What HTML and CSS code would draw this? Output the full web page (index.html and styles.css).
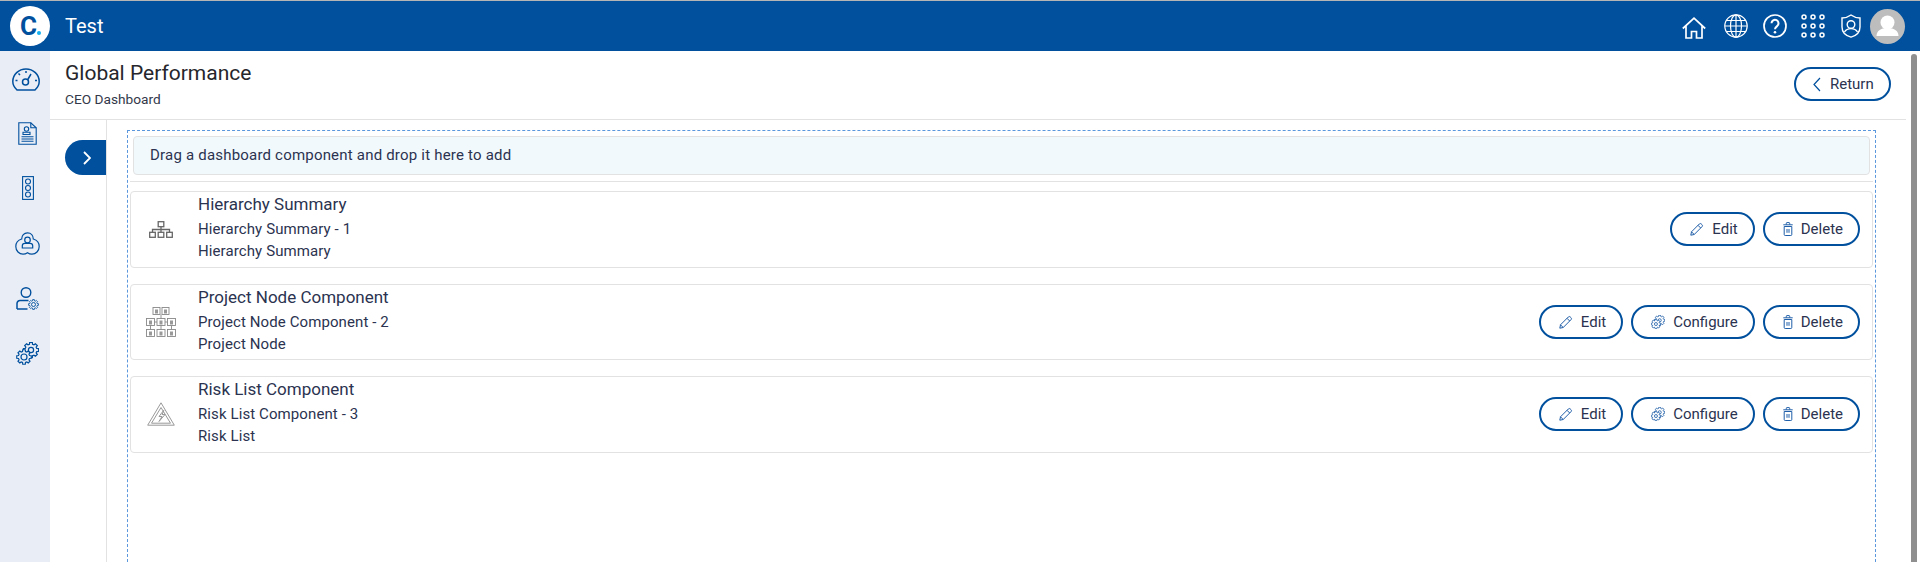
FILE: index.html
```html
<!DOCTYPE html>
<html lang="en">
<head>
<meta charset="utf-8">
<title>Global Performance</title>
<link rel="stylesheet" href="styles.css">
</head>
<body>
<svg class="defs" width="0" height="0" aria-hidden="true">
  <defs>
    <polygon id="gear-shape" points="5.99,-1.6 7.88,-1.39 7.88,1.39 5.99,1.6 5.37,3.1 6.55,4.59 4.59,6.55 3.1,5.37 1.6,5.99 1.39,7.88 -1.39,7.88 -1.6,5.99 -3.1,5.37 -4.59,6.55 -6.55,4.59 -5.37,3.1 -5.99,1.6 -7.88,1.39 -7.88,-1.39 -5.99,-1.6 -5.37,-3.1 -6.55,-4.59 -4.59,-6.55 -3.1,-5.37 -1.6,-5.99 -1.39,-7.88 1.39,-7.88 1.6,-5.99 3.1,-5.37 4.59,-6.55 6.55,-4.59 5.37,-3.1"/>
    <symbol id="i-pencil" viewBox="0 0 14 14"><path d="M.8 13.200l.7-3.400L9.300 2a1.400 1.400 0 0 1 2 0l.7.7a1.400 1.400 0 0 1 0 2L4.200 12.500z M1.500 9.800l2.700 2.700 M8 3.300l2.700 2.700" fill="none" stroke="currentColor" stroke-width="1"/></symbol>
    <symbol id="i-gear2" viewBox="0 0 15 15"><g stroke="currentColor" fill="#fff"><use href="#gear-shape" transform="translate(9.300 5.700) scale(.7)" stroke-width="1.300"/><circle cx="9.300" cy="5.700" r="1.700" stroke-width=".9"/><use href="#gear-shape" transform="translate(5.300 9.700) scale(.64)" stroke-width="1.400"/><circle cx="5.300" cy="9.700" r="1.600" stroke-width=".9"/></g></symbol>
    <symbol id="i-trash" viewBox="0 0 10 14"><path d="M.3 2.800h9.400 M3.300 2.600V1.300a.7.7 0 0 1 .7-.7h2a.7.7 0 0 1 .7.7v1.300 M1.200 4.500h7.600v8a1 1 0 0 1-1 1H2.200a1 1 0 0 1-1-1z M4 7v3.800 M6 7v3.800" fill="none" stroke="currentColor" stroke-width="1"/></symbol>
  </defs>
</svg>
<div class="app">
  <header class="topbar">
    <div class="logo"><span class="logo-c">C</span><span class="logo-dot"></span></div>
    <span class="app-name">Test</span>
    <div class="top-icons">
      <svg class="ti ti-home" viewBox="0 0 24 22"><path d="M.8 11.500L12 1.200 23.200 11.500M4 9v12H9.500V14.500H14.500V21H20V9" fill="none" stroke="#fff" stroke-width="1.700"/></svg>
      <svg class="ti ti-globe" viewBox="0 0 24 24"><g fill="none" stroke="#fff" stroke-width="1.200"><circle cx="12" cy="12" r="11.200"/><ellipse cx="12" cy="12" rx="5.500" ry="11.200"/><path d="M12 .8v22.400M.8 12h22.400M2.500 6.500h19M2.500 17.500h19"/></g></svg>
      <svg class="ti ti-help" viewBox="0 0 24 24"><circle cx="12" cy="12" r="11" fill="none" stroke="#fff" stroke-width="1.700"/><path d="M8.500 9.300a3.500 3.500 0 1 1 5.600 2.800c-1.300 1-2.100 1.600-2.100 3.200" fill="none" stroke="#fff" stroke-width="2"/><circle cx="12" cy="18.300" r="1.300" fill="#fff"/></svg>
      <svg class="ti ti-grid" viewBox="0 0 24 24"><g fill="none" stroke="#fff" stroke-width="1.500"><circle cx="3" cy="3" r="2"/><circle cx="12" cy="3" r="2"/><circle cx="21" cy="3" r="2"/><circle cx="3" cy="12" r="2"/><circle cx="12" cy="12" r="2"/><circle cx="21" cy="12" r="2"/><circle cx="3" cy="21" r="2"/><circle cx="12" cy="21" r="2"/><circle cx="21" cy="21" r="2"/></g></svg>
      <svg class="ti ti-shield" viewBox="0 0 20 24"><g fill="none" stroke="#fff" stroke-width="1.400"><path d="M10 1c2.400 1.800 5.300 2.800 9 3v9c0 5-3.800 8.700-9 10.200C4.800 21.700 1 18 1 13V4c3.700-.2 6.600-1.200 9-3z"/><circle cx="10" cy="10.500" r="3.800"/><path d="M3.500 18c1.400-2.400 3.500-3.400 6.500-3.400s5.100 1 6.500 3.400"/></g></svg>
      <div class="avatar"><svg viewBox="0 0 35 35"><circle cx="17.500" cy="13.500" r="7" fill="#fff"/><path d="M6.500 27c0-5 4-8 11-8s11 3 11 8z" fill="#fff"/></svg></div>
    </div>
  </header>
  <div class="body">
    <nav class="sidebar">
      <svg class="si si-gauge" viewBox="0 0 28 23"><g fill="none" stroke="#00509e" stroke-width="1.500"><path d="M5 22H23C25.700 19.500 27.200 16.500 27.200 13.500A13.200 12.500 0 0 0 .8 13.500C.8 16.500 2.300 19.500 5 22z"/><circle cx="13.500" cy="14" r="3"/><path d="M15.500 12L19 6M3.500 12.500h2M23 12.500h2M14 3v2M6.500 5.500l1.500 1.500"/></g></svg>
      <svg class="si si-doc" viewBox="0 0 19 23"><g fill="none" stroke="#00509e" stroke-width="1.100"><path d="M.8.800h12l5.400 5v16.400H.8z"/><path d="M12.800.8v5h5.400"/><circle cx="8.500" cy="7" r="2.200"/><path d="M5 12.500v-2.300h7v2.300zM3.500 14.800h12M3.500 17h12M3.500 19.300h12"/></g></svg>
      <svg class="si si-panel" viewBox="0 0 12 24"><g fill="none" stroke="#00509e" stroke-width="1.100"><rect x=".6" y=".6" width="10.800" height="22.800"/><circle cx="6" cy="5.500" r="2.500"/><circle cx="6" cy="12" r="2.500"/><circle cx="6" cy="18.500" r="2.500"/></g></svg>
      <svg class="si si-tri" viewBox="0 0 25 23"><g fill="none" stroke="#00509e" stroke-width="1.200"><path d="M12.500.8c3.500 0 5.800 2.700 5.800 6.200 3.500 1 5.900 3.600 5.900 7.500 0 4.300-3.400 7.700-7.200 7.700-1.800 0-3.200-.5-4.500-1.400-1.300.9-2.700 1.400-4.500 1.400C4.200 22.200.8 18.800.8 14.500.8 10.600 3.200 8 6.700 7 6.700 3.500 9 .8 12.500.8z"/><circle cx="12.500" cy="8" r="2.800"/><path d="M7.300 16v-2.300c0-1.500 1-2.400 2.500-2.400h5.400c1.500 0 2.500.9 2.500 2.400V16z"/></g></svg>
      <svg class="si si-user" viewBox="0 0 23 23"><g fill="none" stroke="#00509e" stroke-linejoin="round"><circle cx="10" cy="5.500" r="4.800" stroke-width="1.400"/><path d="M1 22V16.500a3 3 0 0 1 3-3h8.500M1 22h10.500" stroke-width="1.500"/></g><g stroke="#00509e" fill="#e9edf5"><use href="#gear-shape" transform="translate(17.500 17.500) scale(.62)" stroke-width="1.400"/><circle cx="17.500" cy="17.500" r="2" stroke-width=".9"/></g></svg>
      <svg class="si si-gears" viewBox="0 0 23 23"><g stroke="#00509e" fill="#e9edf5"><use href="#gear-shape" transform="translate(15 8) scale(.96)" stroke-width="1.300"/><circle cx="15" cy="8" r="2.600" stroke-width="1.200"/><use href="#gear-shape" transform="translate(8 15) scale(.92)" stroke-width="1.300"/><circle cx="8" cy="15" r="3" stroke-width="1.200"/></g></svg>
    </nav>
    <main class="main">
      <div class="page-head">
        <div>
          <h1 class="page-title">Global Performance</h1>
          <p class="page-sub">CEO Dashboard</p>
        </div>
        <button class="btn btn-return"><svg class="chev-l" viewBox="0 0 8 15"><path d="M7 1L1 7.500l6 6.500" fill="none" stroke="#00509e" stroke-width="1.200"/></svg>Return</button>
      </div>
      <div class="content">
        <div class="rail">
          <button class="toggle"><svg viewBox="0 0 8 14"><path d="M1 1l6 6-6 6" fill="none" stroke="#fff" stroke-width="1.800"/></svg></button>
        </div>
        <div class="canvas">
          <div class="dropzone">
            <div class="drop-hint">Drag a dashboard component and drop it here to add</div>
            <div class="drop-rule"></div>
            <section class="card">
              <svg class="card-icon icon-hier" viewBox="0 0 24 17"><g fill="none" stroke="#666" stroke-width="1.300"><rect x="9.200" y=".7" width="5.600" height="5"/><rect x=".7" y="11.300" width="5.600" height="5"/><rect x="9.200" y="11.300" width="5.600" height="5"/><rect x="17.700" y="11.300" width="5.600" height="5"/><path d="M12 5.700v5.600M3.500 11.300V8.500h17v2.800"/></g></svg>
              <div class="card-text">
                <h2 class="card-title">Hierarchy Summary</h2>
                <p class="card-line">Hierarchy Summary - 1</p>
                <p class="card-line">Hierarchy Summary</p>
              </div>
              <div class="actions">
                <button class="btn"><svg class="bi"><use href="#i-pencil"/></svg>Edit</button>
                <button class="btn"><svg class="bi bi-trash"><use href="#i-trash"/></svg>Delete</button>
              </div>
            </section>
            <section class="card">
              <svg class="card-icon icon-node" viewBox="0 0 30 30"><g fill="#fff" stroke="#888" stroke-width=".9"><rect x="7" y=".5" width="7" height="7"/><rect x="16" y=".5" width="7" height="7"/><rect x=".5" y="11.500" width="8" height="7"/><rect x="11" y="11.500" width="8" height="7"/><rect x="21.500" y="11.500" width="8" height="7"/><rect x=".5" y="22.500" width="8" height="7"/><rect x="11" y="22.500" width="8" height="7"/><rect x="21.500" y="22.500" width="8" height="7"/><path d="M15 7.500v4M8.500 15H11M19 15h2.500M4.500 18.500v4M15 18.500v4M25.500 18.500v4" fill="none"/></g><g fill="#999"><rect x="9" y="2.500" width="3" height="4"/><rect x="18" y="2.500" width="3" height="4"/><rect x="3" y="13.500" width="3" height="4"/><rect x="13.500" y="13.500" width="3" height="4"/><rect x="24" y="13.500" width="3" height="4"/><rect x="3" y="24.500" width="3" height="4"/><rect x="13.500" y="24.500" width="3" height="4"/><rect x="24" y="24.500" width="3" height="4"/></g></svg>
              <div class="card-text">
                <h2 class="card-title">Project Node Component</h2>
                <p class="card-line">Project Node Component - 2</p>
                <p class="card-line">Project Node</p>
              </div>
              <div class="actions">
                <button class="btn"><svg class="bi"><use href="#i-pencil"/></svg>Edit</button>
                <button class="btn"><svg class="bi"><use href="#i-gear2"/></svg>Configure</button>
                <button class="btn"><svg class="bi bi-trash"><use href="#i-trash"/></svg>Delete</button>
              </div>
            </section>
            <section class="card">
              <svg class="card-icon icon-risk" viewBox="0 0 28 24"><g fill="none" stroke="#999" stroke-width="1"><path d="M14 .8L27.300 23.200H.7z" stroke-linejoin="round"/><path d="M14 5.500L23.500 21.200H4.500z"/><path d="M16.500 8.500l-4.500 6h3l-3 5 6-7h-3l2-4z"/></g></svg>
              <div class="card-text">
                <h2 class="card-title">Risk List Component</h2>
                <p class="card-line">Risk List Component - 3</p>
                <p class="card-line">Risk List</p>
              </div>
              <div class="actions">
                <button class="btn"><svg class="bi"><use href="#i-pencil"/></svg>Edit</button>
                <button class="btn"><svg class="bi"><use href="#i-gear2"/></svg>Configure</button>
                <button class="btn"><svg class="bi bi-trash"><use href="#i-trash"/></svg>Delete</button>
              </div>
            </section>
          </div>
        </div>
      </div>
    </main>
    <div class="scroll-track"><div class="scroll-thumb"></div></div>
  </div>
</div>
</body>
</html>
```
FILE: styles.css
```css
* { box-sizing: border-box; }
html, body { margin: 0; height: 100%; overflow: hidden; background: #fff; }
body { font-family: Roboto, "Liberation Sans", sans-serif; color: #2b3350; }
.defs { display: block; height: 0; }
.app { height: 562px; display: flex; flex-direction: column; border-top: 1px solid #b5b5b5; }

.topbar { height: 50px; flex: none; background: #00509e; display: flex; align-items: center; padding-left: 10px; color: #fff; }
.logo { width: 40px; height: 40px; border-radius: 50%; background: #fff; display: flex; align-items: center; justify-content: center; position: relative; }
.logo-c { font-size: 26px; font-weight: 700; color: #00509e; line-height: 1; margin-left: -3px; }
.logo-dot { position: absolute; width: 4px; height: 4px; border-radius: 50%; background: #14b0f0; left: 27px; top: 25px; }
.app-name { margin-left: 15px; font-size: 20px; color: #fff; }
.top-icons { margin-left: auto; display: flex; align-items: center; padding-right: 15px; }
.ti { width: 24px; height: 24px; display: block; flex: none; }
.ti-home { height: 22px; margin-top: 3px; }
.ti-globe { margin-left: 18px; }
.ti-help { margin-left: 15px; }
.ti-grid { margin-left: 14px; }
.ti-shield { width: 20px; margin-left: 16px; }
.avatar { width: 35px; height: 35px; border-radius: 50%; background: #bdbdbd; margin-left: 9px; }
.avatar svg { display: block; width: 35px; height: 35px; }

.body { flex: 1; display: flex; min-height: 0; }
.sidebar { width: 50px; flex: none; background: #e9edf5; display: flex; flex-direction: column; align-items: center; padding-top: 16px; gap: 32px; }
.si { display: block; flex: none; }
.si-gauge { width: 28px; height: 23px; margin: 1px 0 -1px 1px; }
.si-doc { width: 19px; height: 23px; margin-left: 4px; }
.si-panel { width: 12px; height: 24px; margin-top: -1px; margin-left: 6px; }
.si-tri { width: 25px; height: 23px; margin-left: 5px; }
.si-user { width: 23px; height: 23px; margin-left: 5px; }
.si-gears { width: 23px; height: 23px; margin-left: 5px; }

.main { flex: 1; min-width: 0; display: flex; flex-direction: column; }
.page-head { height: 69px; flex: none; border-bottom: 1px solid #e2e2e2; display: flex; justify-content: space-between; align-items: flex-start; padding: 8px 15px 0 15px; }
.page-title { margin: 0; font-size: 21px; font-weight: 400; line-height: 28px; color: #26262c; }
.page-sub { margin: 4px 0 0; font-size: 13.700px; line-height: 16px; color: #33384a; }
.btn { height: 34px; padding: 0 15px 0 18px; background: #fff; border: 2px solid #00509e; border-radius: 17px; display: inline-flex; align-items: center; font: 400 15px Roboto, sans-serif; color: #2b3350; white-space: nowrap; }
.btn-return { margin-top: 8px; width: 97px; padding: 0 0 0 17px; }
.chev-l { width: 8px; height: 15px; margin-right: 9px; flex: none; }
.bi { width: 14px; height: 14px; color: #1f5ea8; margin-right: 8px; flex: none; }
.bi-trash { width: 10px; }

.content { flex: 1; display: flex; min-height: 0; }
.rail { width: 57px; flex: none; border-right: 1px solid #e2e2e2; padding: 20px 0 0 15px; }
.toggle { width: 41px; height: 35px; display: flex; align-items: center; justify-content: center; padding: 0 0 0 3px; background: #00509e; border: 0; border-radius: 18px 0 0 18px; }
.toggle svg { width: 8px; height: 14px; }
.canvas { flex: 1; min-width: 0; padding: 10px 30px 0 20px; }
.dropzone { height: 100%; border: 1px dashed #5b97dc; border-bottom: 0; padding: 5px 2px 0; }
.drop-hint { height: 39px; margin: 0 3px; background: #f2f9fd; border: 1px solid #e2e2e2; border-radius: 4px; padding-left: 16px; font-size: 15px; letter-spacing: .2px; line-height: 37px; color: #2b3350; }
.drop-rule { height: 1px; background: #e2e2e2; margin: 6px 0 9px; }
.card { height: 76.500px; border: 1px solid #e2e2e2; border-radius: 4px; display: flex; align-items: center; margin-bottom: 16px; padding: 0 12px 0 0; position: relative; }
.card-icon { flex: none; }
.icon-hier { width: 24px; height: 17px; margin-left: 18px; }
.icon-node { width: 30px; height: 30px; margin-left: 15px; }
.icon-risk { width: 28px; height: 24px; margin-left: 16px; }
.card-text { position: absolute; left: 67px; top: 1px; }
.card-title { margin: 0; font-size: 17px; font-weight: 400; line-height: 22px; color: #2b3350; }
.card-line { margin: 0; font-size: 15px; letter-spacing: .1px; line-height: 22px; color: #2b3350; }
.card-title + .card-line { margin-top: 3px; }
.actions { margin-left: auto; display: flex; gap: 8px; }

.scroll-track { width: 14px; flex: none; margin-top: 3px; padding-left: 5px; }
.scroll-thumb { width: 6px; height: 100%; background: #8f8f8f; border-radius: 3px 3px 0 0; }
```
